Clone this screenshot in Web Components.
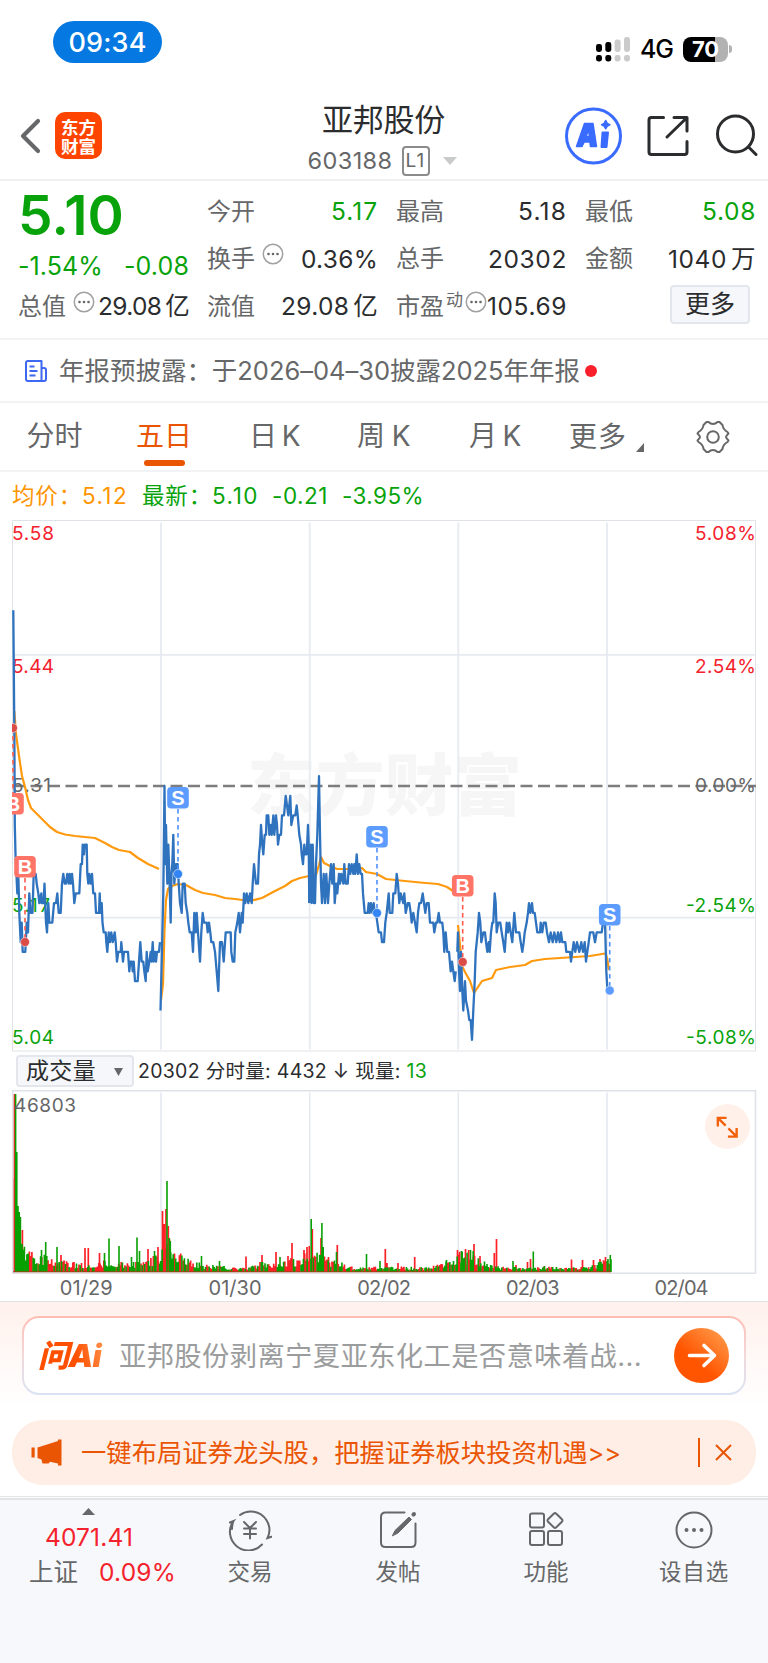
<!DOCTYPE html>
<html lang="zh-CN">
<head>
<meta charset="UTF-8">
<meta name="viewport" content="width=device-width, initial-scale=1.0">
<title>亚邦股份 603188</title>
<style>
    :root {
        --ink: #2b2c2e;
        --grey: #666768;
        --up: #f4222d;
        --down: #08a30b;
        --brand: #ea5504;
    }
    body {
        margin: 0;
        width: 768px;
        height: 1663px;
        overflow: hidden;
        background: #fff;
        color: var(--ink);
        font-family: Inter, "Noto Sans CJK SC", sans-serif;
        font-size: 24px;
        line-height: 1;
    }
</style>
</head>
<body>
<stock-page></stock-page>

<script>
// Spreads its text over a given width with letter-spacing
class FitText extends HTMLElement {
    constructor() {
        super();
        this.attachShadow({ mode: 'open' });
        this.shadowRoot.innerHTML = '<style>:host { display: inline-block; white-space: nowrap; flex: none; text-align: left; }</style><slot></slot>';
    }

    connectedCallback() {
        const target = parseFloat(this.getAttribute('w'));
        const natural = this.getBoundingClientRect().width;
        const count = Array.from(this.textContent).length;
        this.style.letterSpacing = (target - natural) / count + 'px';
        this.style.width = target + 'px';
    }
}
customElements.define('fit-text', FitText);

class StatusBar extends HTMLElement {
    constructor() {
        super();
        this.attachShadow({ mode: 'open' });
        this.shadowRoot.innerHTML = `
            <style>
                :host { display: flex; justify-content: space-between; height: 88px; box-sizing: border-box; padding: 21px 36px 0 53px; color: #000; }
                .time { width: 109px; height: 42px; border-radius: 21px; background: #0579e1; color: #fff; display: flex; align-items: center; justify-content: center; font-size: 27px; font-weight: 500; }
                .right { display: flex; align-items: center; height: 56px; }
                .net { margin-left: 10px; font-size: 25px; font-weight: 500; }
                .battery { margin-left: 10px; width: 45px; height: 25px; border-radius: 8px; background: linear-gradient(90deg, #000 71%, #b2b2b2 71%); color: #fff; font-size: 22px; font-weight: 700; display: flex; align-items: center; justify-content: center; }
                .nub { width: 3px; height: 8px; margin-left: 1px; border-radius: 0 4px 4px 0; background: #b2b2b2; }
            </style>
            <div class="time"><fit-text w="78">09:34</fit-text></div>
            <div class="right">
                <svg width="34" height="25" viewBox="0 0 34 25">
                    <g fill="#000"><rect x="0" y="7" width="6" height="8" rx="2.4"/><rect x="9.3" y="5" width="6" height="10" rx="2.4"/><rect x="0" y="18" width="6" height="6.5" rx="2.4"/><rect x="9.3" y="18" width="6" height="6.5" rx="2.4"/></g>
                    <g fill="#cbcbcb"><rect x="18.6" y="2.5" width="6" height="12.5" rx="2.4"/><rect x="28" y="0" width="6" height="15" rx="2.4"/><rect x="18.6" y="18" width="6" height="6.5" rx="2.4"/><rect x="28" y="18" width="6" height="6.5" rx="2.4"/></g>
                </svg>
                <fit-text class="net" w="33">4G</fit-text>
                <div class="battery"><fit-text w="27">70</fit-text></div>
                <div class="nub"></div>
            </div>
        `;
    }
}
customElements.define('status-bar', StatusBar);

class StockHeader extends HTMLElement {
    constructor() {
        super();
        this.attachShadow({ mode: 'open' });
        this.shadowRoot.innerHTML = `
            <style>
                :host { display: grid; grid-template-columns: 1fr 1fr 1fr; height: 93px; box-sizing: border-box; border-bottom: 2px solid #eeeff1; }
                .left { display: flex; padding: 24px 0 0 20px; align-items: flex-start; }
                .back { margin: 6px 13px 0 0; }
                .logo { width: 47px; height: 47px; border-radius: 10px; background: #ff4400; color: #fff; font: 700 17.5px/19px "Noto Sans CJK SC", sans-serif; text-align: center; padding-top: 5px; box-sizing: border-box; }
                .title { text-align: center; padding-top: 16px; font-size: 31px; line-height: 32px; margin-left: -1px; }
                .code { display: flex; align-items: center; justify-content: center; margin: 10px 4px 0 0; color: var(--grey); font-size: 23.5px; line-height: 30px; }
                .level { border: 2px solid #8b8c8d; border-radius: 4px; width: 24px; height: 26px; margin: 0 13px 0 9px; font-size: 19px; line-height: 26px; text-align: center; }
                .right { display: flex; justify-content: flex-end; padding: 18px 10.5px 0 0; }
            </style>
            <div class="left">
                <svg class="back" width="22" height="36" viewBox="0 0 22 36" fill="none" stroke="#666768" stroke-width="4.2" stroke-linecap="round" stroke-linejoin="round"><path d="M18 3L3 18l15 15"/></svg>
                <div class="logo">东方<br>财富</div>
            </div>
            <div>
                <div class="title"><fit-text w="123">亚邦股份</fit-text></div>
                <div class="code"><fit-text w="85">603188</fit-text><span class="level"><fit-text w="20">L1</fit-text></span><svg width="14" height="8"><path d="M0 0h14L7 8z" fill="#c9cacb"/></svg></div>
            </div>
            <div class="right">
                <svg width="193" height="60" viewBox="0 0 193 60" fill="none" stroke="#2b2c2e" stroke-width="3" stroke-linecap="round" stroke-linejoin="round">
                    <circle cx="28.5" cy="30" r="27" stroke="#3a6bff"/>
                    <path d="M19.500 17.500h8.500L31.500 40.500h-6l-.6-4.500h-5.700L17 40.500h-5.500zM23.700 24l-2.700 6.500h3.400z" fill="#3a6bff" fill-rule="evenodd" stroke="#3a6bff" stroke-width="1.500"/>
                    <path d="M37.500 26.500h5.500L41.500 41h-5z" fill="#3a6bff" stroke="#3a6bff" stroke-width="2"/>
                    <path d="M40.700 14.500q1 3.400 4.200 4.200-3.200.8-4.200 4.200-1-3.400-4.200-4.200 3.200-.8 4.200-4.200z" fill="#3a6bff" stroke="#3a6bff" stroke-width="1.500"/>
                    <path d="M98.500 11.500H86.500q-2.500 0-2.500 2.500v32q0 2.500 2.500 2.500h33q2.500 0 2.500-2.500V35.500M109 11.500h13V25M121 12.500L102 31"/>
                    <circle cx="170.500" cy="28" r="18"/>
                    <path d="M183.500 41l7.500 7.500"/>
                </svg>
            </div>
        `;
    }
}
customElements.define('stock-header', StockHeader);

// One label / value line of the quote table; info adds the round hint icon
class QuoteCell extends HTMLElement {
    constructor() {
        super();
        this.attachShadow({ mode: 'open' });
        const sup = this.getAttribute('sup') || '';
        const info = this.hasAttribute('info');
        const unit = this.getAttribute('unit') || '';
        this.shadowRoot.innerHTML = `
            <style>
                :host { display: flex; align-items: center; justify-content: space-between; height: 47px; }
                .label { display: flex; color: var(--grey); font-size: 24px; line-height: 30px; margin-right: -20px; }
                .value { color: var(--cell, var(--ink)); font-size: 24.5px; }
                .sup { font-size: 17px; line-height: 18px; margin: -1px 2px 0 2px; }
                .unit { margin-left: 4px; }
                svg { margin: -1px 0 0 7px; }
                .sup + svg { margin-left: 0; }
            </style>
            <span class="label"><fit-text w="48">${this.getAttribute('label')}</fit-text>${sup ? `<span class="sup">${sup}</span>` : ''}${info ? `
                <svg width="22" height="22" viewBox="0 0 22 22"><circle cx="11" cy="11" r="9.7" fill="none" stroke="#a0a1a2" stroke-width="1.500"/><g fill="#666768"><circle cx="6.500" cy="11" r="1.300"/><circle cx="11" cy="11" r="1.300"/><circle cx="15.500" cy="11" r="1.300"/></g></svg>` : ''}</span>
            <fit-text class="value" w="${this.getAttribute('w')}">${this.getAttribute('value')}${unit ? `<span class="unit">${unit}</span>` : ''}</fit-text>
        `;
    }
}
customElements.define('quote-cell', QuoteCell);

class QuotePanel extends HTMLElement {
    constructor() {
        super();
        this.attachShadow({ mode: 'open' });
        this.shadowRoot.innerHTML = `
            <style>
                :host { display: grid; grid-template-columns: repeat(4, 171px); grid-auto-rows: 47.5px; column-gap: 18px; height: 159px; box-sizing: border-box; padding: 7px 0 0 18px; border-bottom: 2px solid #f2f3f5; }
                .price { color: var(--down); font-size: 55px; font-weight: 600; line-height: 55px; }
                .change { color: var(--down); display: flex; justify-content: space-between; align-items: center; padding-top: 14px; font-size: 25px; }
                .down { --cell: var(--down); }
                .more { justify-self: end; margin: 2px 6px 0 0; width: 80px; height: 39px; box-sizing: border-box; border: 2px solid #e3e6ec; border-radius: 4px; background: #f6f7fa; font-size: 25px; display: flex; align-items: center; justify-content: center; }
            </style>
            <div class="price"><fit-text w="106">5.10</fit-text></div>
            <quote-cell class="down" label="今开" value="5.17" w="47"></quote-cell>
            <quote-cell label="最高" value="5.18" w="49"></quote-cell>
            <quote-cell class="down" label="最低" value="5.08" w="54"></quote-cell>
            <div class="change"><fit-text w="85">-1.54%</fit-text><fit-text w="65">-0.08</fit-text></div>
            <quote-cell label="换手" info value="0.36%" w="77"></quote-cell>
            <quote-cell label="总手" value="20302" w="79"></quote-cell>
            <quote-cell label="金额" value="1040" unit="万" w="88"></quote-cell>
            <quote-cell label="总值" info value="29.08" unit="亿" w="91"></quote-cell>
            <quote-cell label="流值" value="29.08" unit="亿" w="97"></quote-cell>
            <quote-cell label="市盈" sup="动" info value="105.69" w="80"></quote-cell>
            <div class="more">更多</div>
        `;
    }
}
customElements.define('quote-panel', QuotePanel);

class NoticeLine extends HTMLElement {
    constructor() {
        super();
        this.attachShadow({ mode: 'open' });
        this.shadowRoot.innerHTML = `
            <style>
                :host { display: flex; align-items: center; height: 63px; box-sizing: border-box; border-bottom: 2px solid #f2f3f5; padding-left: 25px; color: var(--grey); font-size: 25.5px; }
                fit-text { margin-left: 12px; }
                i { width: 12px; height: 12px; border-radius: 50%; background: #f9202b; margin-left: 5px; }
            </style>
            <svg width="22" height="22" viewBox="0 0 22 22" fill="none" stroke="#3f68f0" stroke-width="2" stroke-linejoin="round"><path d="M3 1h13.500v20H3q-2 0-2-2V3q0-2 2-2zM16.500 8H19q2 0 2 2v9q0 2-2 2h-2.500M4.500 6.500h5M4.500 11h8M4.500 15.500h6"/></svg>
            <fit-text w="521">${this.getAttribute('text')}</fit-text>
            <i></i>
        `;
    }
}
customElements.define('notice-line', NoticeLine);

class PeriodTabs extends HTMLElement {
    constructor() {
        super();
        this.attachShadow({ mode: 'open' });
        this.shadowRoot.innerHTML = `
            <style>
                :host { display: grid; grid-template-columns: 109px 110px 110px 109px 113px 127px 70px; height: 69px; box-sizing: border-box; border-bottom: 2px solid #f2f3f5; color: var(--grey); font-size: 28px; }
                div { display: flex; flex-direction: column; align-items: center; height: 67px; line-height: 66px; }
                .on { color: var(--brand); }
                .on::after { content: ""; width: 41px; height: 6px; border-radius: 3px; background: currentColor; margin-top: -9px; }
                .row { flex-direction: row; padding-left: 18px; box-sizing: border-box; }
                .row svg { margin: 21px 0 0 9px; }
                .gear { justify-content: center; }
            </style>
            <div>分时</div>
            <div class="on">五日</div>
            <div><fit-text w="50">日 K</fit-text></div>
            <div><fit-text w="53">周 K</fit-text></div>
            <div><fit-text w="51">月 K</fit-text></div>
            <div class="row"><fit-text w="58">更多</fit-text><svg width="8" height="9"><path d="M8 0v9H0z" fill="#666768"/></svg></div>
            <div class="gear"><svg width="34" height="34" viewBox="0 0 34 34" fill="none" stroke="#666768" stroke-width="2" stroke-linejoin="round"><path d="M12.500 2q2 2 4.500 2t4.500-2h2l3 3q.5 4.500 5 7l1 1.500Q30 16 30 17t2.500 3.500L31.500 22q-4.500 2.500-5 7l-3 3h-2q-2-2-4.500-2t-4.500 2h-2l-3-3q-.5-4.500-5-7l-1-1.500Q4 18 4 17T1.500 13.500L2.500 12q4.500-2.500 5-7l3-3z"/><circle cx="17" cy="17" r="5.800"/></svg></div>
        `;
    }
}
customElements.define('period-tabs', PeriodTabs);

class ChartLegend extends HTMLElement {
    constructor() {
        super();
        this.attachShadow({ mode: 'open' });
        this.shadowRoot.innerHTML = `
            <style>
                :host { display: flex; align-items: center; height: 48px; padding-left: 12px; font-size: 22.5px; color: var(--down); }
                .avg { color: #ff9500; }
            </style>
            <fit-text class="avg" w="70">均价：</fit-text><fit-text class="avg" w="46">5.12</fit-text>
            <fit-text w="70" style="margin-left:14px">最新：</fit-text><fit-text w="47">5.10</fit-text>
            <fit-text w="56" style="margin-left:13px">-0.21</fit-text><fit-text w="82" style="margin-left:14px">-3.95%</fit-text>
        `;
    }
}
customElements.define('chart-legend', ChartLegend);

// Price line: x, ticks (0.01) below the previous close, one list a day
const PRICE = [
    [13.3,-18,14.3,-6,14.8,4,15.5,7,16,8,17.3,11,18.3,9,19.3,13,20.7,16,21.7,14,22.7,17,25.3,17,26.7,14,28,15,29.3,11,30.7,13,32.5,13,33.7,9,35.7,9,36.7,10,38.3,11,39.3,12,41.3,11,41.6,12,43.5,12,44.5,10,46,14,47,15,48.3,12,49.3,14,52.3,14,54,12,56,12,57.3,11,58.7,13,60.7,13,62,10,63.3,9,64.7,10,66,10,67.3,9,68.7,10,69.7,9,70.8,10,72,9,73,10,74.3,12,75.7,11,79.3,11,80.7,8,82,8,82.7,6,84,7,84.7,6,86.7,6,87.3,9,88.3,10,89.3,9,90.7,10,92,9,93.3,11,95,11,96,13,99,13,99.7,11,100.5,13,101.7,12,102.5,14,103.7,15,105.7,15,106.3,16,107.3,17,108.7,15,110,16,111.3,15,112.7,16,114.7,15,115.7,16,117,18,118.3,17,120.7,17,121.3,16,123,18,124,17,128,17,129.3,19,130.3,18,132,18,132.7,19,133.7,18,135,20,137.7,20,139,18,140.3,16,141.7,18,143.3,18,144.3,19,145.7,20,146.7,17,147.7,19,149.3,18,150.7,17,151.5,18,152.7,16,153.7,18,155,17,156,18,157,17,159,17,160,16],
    [160.5,23,161.7,18,163.3,11,164.5,0,165.3,8,166,4,167.3,10,168.3,6,169.3,9,170.7,14,171.5,9,172.3,8,173.3,5,174.3,10,176,8,177.7,8,178.7,10,180,12,181.7,13,182.7,10,184.7,10,185.7,12,187.3,13,188.3,14,189.7,15,191.7,15,193,17,194.3,13,195.7,15,196.7,13,198,15,200,18,201.3,15,202.7,13,204,14,206.7,14,207.7,15,209,14,210.3,15,211.3,16,213.3,16,215,17,216.7,19,218.3,21,220,16,222,16,223.7,18,225.7,15,230.7,15,231.3,17,232.7,18,234.3,18,235.3,15,237.3,14,238.7,13,240,15,241.7,13,242.7,14,244,11,245.3,12,246.7,11,248.3,12,250,11,251.7,12,252.7,10,254,8,256,10,258,10,259,7,260,6,261,4,262.3,6,263.3,7,264.7,5,266,5,266.7,3,268.3,3,269.3,5,270.7,4,271.7,5,273.3,3,274.3,5,276,3,277,4,278,6,279.3,5,281,5,282,3,284,3,285.7,1,287,2,288.3,3,290.3,1,291.3,4,293.3,3,295.3,3,296.7,2,297.7,3,299.3,5,301,6,301.7,7,303,8,304.3,6,305.3,7,306.7,7,308,4,308.7,6,309.3,12],
    [309.3,12,310.7,6,311.7,12,312.7,6,314,12,315,12,316,8,317.3,5,319,-1,320,5,321,10,322,12,323.7,9,325,12,326.3,9,328,12,329.3,10,331,8,332.3,10,333.7,8,334.7,12,336.3,10,337.3,11,339,9,340,10,341.3,9,343.3,10,344.3,8,345.7,10,347.7,10,349,8,350.3,9,351.7,8,353.3,9,354.3,8,355.3,9,356.7,7,358,9,359.3,8,360.7,9,362,9,363,11,364.7,13,367.7,13,368.7,12,369.7,13,371,12,372.3,13,373.7,12,374.7,13,376,13,377.3,14,378.7,15,381,15,382,16,384,16,385.3,14,386.7,13,388.7,11,389.7,13,392.3,13,393.3,11,395.3,11,396.7,9,398,10,399.3,12,400.7,11,403.3,12,404.3,11,405.7,13,407.7,12,409.3,12,410.7,13,411.7,14,413.3,13,415,14,416.7,15,418,13,419.3,12,421,12,422.7,11,424,12,425.3,13,426.7,12,428.7,12,430,14,433.3,14,434.3,15,436,14,437.3,14,438.7,13,440,14,442.3,14,443.3,15,444.3,17,445.7,15,447.3,17,449,17,450.7,19,452,18,453.3,19,454.7,20,455.7,19],
    [457.3,17,458,15,459,19,460,21,461,17,462.3,21,463.3,23,465,20,466,22,468,23,469.3,24,470.7,24,472,26,473.3,23,474.7,20,475.7,17,477.7,15,479,13,480.3,14,481.3,16,483.3,15,485,15,486,16,487.3,17,488.7,16,489.7,17,491,15,492.3,14,493.3,14,494.7,11,495.7,12,496.7,15,498.3,14,500.3,14,501.7,15,503.3,16,504.7,17,506.7,14,508,15,509.3,14,510.7,15,512.3,16,514.3,13,516,15,519.3,15,520.7,16,522.3,17,523.7,16,524.7,15,526.7,14,528,13,529,12,530.3,13,532,12,533,13,534.7,13,536,14,537.3,15,540,15,540.7,14,542.3,15,543.7,14,545.7,14,547,15,549,16,550.7,15,552.7,16,554.3,15,556.3,16,558,15,559.7,16,561,15,562.3,16,565.3,16,566.3,17,570,17,571,18,572.3,17,573.7,16,575.3,17,577,16,579.3,17,581.3,16,583,17,584.7,16,586,18,587.3,17,588.7,16,590,15,593.3,15,595,16,596.7,15,601.7,15,603,14,604.7,13,605.3,15,606.3,19,607.5,21]
];

// Average line: x, y
const AVERAGE = [
    'M14.3 711L16 734 19 756 22 776 25 787 28 800 31 808 37 814 44 821 50 827 57 832 65 834.5 75 836 95 838 105 843 112 847 119 850 130 852 138 858 148 864 159 869',
    'M161 1000L163 984 164.5 930 166 900 168 889 172 886 178 884 186 885 195 890 203 893 215 895 225 898 235 899 250 901 262 898 275 891 285 886 292 881 300 878 309 876',
    'M310 877L316 875 319 865 321 857 324 863 330 866 337 869 350 869 362 868 366 872 377 874 386 879 405 881 420 882.5 438 884 447 887 456 893',
    'M458 925L460 945 462 966 465 972 470 981 474 993 478 987 482 981 492 978 496 970 510 967 525 965 532 961 545 959 560 958 590 956 605 953.5',
    'M605.5 953L607 958 609 970'
];

// Own trades: side, x, top of the badge, y of the dot
const TRADES = [
    ['B', 13, 793, 728],
    ['B', 25, 856, 942],
    ['S', 178, 787, 874],
    ['S', 377, 826, 913],
    ['B', 462.7, 875, 962],
    ['S', 609.7, 904, 990.5]
];

class PriceChart extends HTMLElement {
    constructor() {
        super();
        this.attachShadow({ mode: 'open' });
        const line = PRICE.map(day => {
            const pts = [];
            for (let i = 0; i < day.length; i += 2) {
                pts.push(day[i] + ',' + (786 + day[i + 1] * 9.76).toFixed(1));
            }
            return `<polyline points="${pts.join(' ')}"/>`;
        }).join('');
        const trades = TRADES.map(([side, x, top, dot]) => {
            const fill = side === 'B' ? '#ff7467' : '#5c9cff';
            const stroke = side === 'B' ? '#ff5a4c' : '#4c90fa';
            const point = side === 'B' ? '#dc4c47' : (x > 600 ? '#5c9cff' : '#3385f5');
            const from = dot > top ? top + 22 : dot;
            const to = dot > top ? dot : top;
            return `
                <path d="M${x} ${from}V${to}" stroke="${stroke}" stroke-width="1.600" stroke-dasharray="4.500 3.500"/>
                <circle cx="${x}" cy="${dot}" r="4.500" fill="${point}" stroke="#fff" stroke-opacity=".5" stroke-width="1"/>
                <rect x="${x - 10.8}" y="${top}" width="21.600" height="21.600" rx="4" fill="${fill}"/>
                <text x="${x}" y="${top + 18}" text-anchor="middle" font-family="Liberation Sans" font-size="20" font-weight="700" fill="#fff">${side}</text>`;
        }).join('');
        this.shadowRoot.innerHTML = `
            <style>
                :host { display: block; height: 532px; }
                svg { display: block; }
                .axis { font-size: 19px; }
                .mark { font: 900 67px "Noto Sans CJK SC", sans-serif; fill: #f6f6f7; }
            </style>
            <svg width="768" height="532" viewBox="0 520 768 532" fill="none">
                <defs><clipPath id="frame"><path d="M12 520h744v532H12z"/></clipPath></defs>
                <text class="mark" x="247" y="810" textLength="275" lengthAdjust="spacingAndGlyphs">东方财富</text>
                <path d="M12.500 520.500h743v530.500h-743z" stroke="#dfe2e6"/>
                <path d="M13 654.800h743M13 917.700h743M161 522.500v527M309.700 522.500v527M458.300 522.500v527M607 522.500v527" stroke="#e7eaf1" stroke-width="1.800"/>
                <path d="M13 786H756" stroke="#7d7d7d" stroke-width="2.400" stroke-dasharray="12 5.500"/>
                <g class="axis">
                    <g fill="#f4222d">
                        <text x="12" y="539.500" textLength="42">5.58</text>
                        <text x="12" y="672.500" textLength="42">5.44</text>
                        <text x="695" y="539.500" textLength="61">5.08%</text>
                        <text x="695" y="672.500" textLength="61">2.54%</text>
                    </g>
                    <g fill="#666768">
                        <text x="12" y="792" textLength="39">5.31</text>
                        <text x="695" y="792" textLength="61">0.00%</text>
                    </g>
                    <g fill="#08a30b">
                        <text x="12" y="912" textLength="38">5.17</text>
                        <text x="12" y="1044" textLength="42">5.04</text>
                        <text x="686" y="912" textLength="70">-2.54%</text>
                        <text x="686" y="1044" textLength="70">-5.08%</text>
                    </g>
                </g>
                <g clip-path="url(#frame)">
                    <g stroke="#ff9a0f" stroke-width="2.200" stroke-linejoin="round">${AVERAGE.map(d => `<path d="${d}"/>`).join('')}</g>
                    <g stroke="#2f73bf" stroke-width="2.300" stroke-linejoin="round">${line}</g>
                </g>
                <g clip-path="url(#frame)">${trades}</g>
            </svg>
        `;
    }
}
customElements.define('price-chart', PriceChart);

class VolumeLegend extends HTMLElement {
    constructor() {
        super();
        this.attachShadow({ mode: 'open' });
        this.shadowRoot.innerHTML = `
            <style>
                :host { display: flex; align-items: center; height: 38px; padding-left: 16px; font-size: 19.5px; }
                .pick { display: flex; align-items: center; width: 118px; height: 32px; box-sizing: border-box; border: 2px solid #e3e6ec; border-radius: 4px; background: #f6f7fa; padding: 1px 0 0 8px; font-size: 23px; margin-right: 4px; }
                .pick svg { margin-left: 18px; }
                .now { color: var(--down); }
                .stats { padding-top: 2px; }
            </style>
            <div class="pick"><fit-text w="70">成交量</fit-text><svg width="9" height="8"><path d="M0 0h9L4.500 8z" fill="#666768"/></svg></div>
            <fit-text class="stats" w="289">20302 分时量: 4432 ↓ 现量: <span class="now">13</span></fit-text>
        `;
    }
}
customElements.define('volume-legend', VolumeLegend);

// Typical bar height along the axis: x, height
const LEVEL = [21,30,26,26,30,22,36,18,45,16,52,14,60,11,75,9,90,8,100,10,112,12,125,8,135,10,145,12,155,16,160,18,163,30,170,30,174,21,182,17,190,12,205,7,220,6,235,4,250,5,262,10,268,7,280,9,290,13,300,13,305,19,310,25,314,19,325,18,330,12,340,10,350,5,375,5,395,5,430,5,440,8,450,12,456,15,460,21,470,18,480,12,490,7,500,5,545,5,570,4,590,6,600,10,610,15];
// Bars that stand out: x, height, 1 for a rise
const SPIKES = [13.3,93,1,14.2,178,1,15.6,178,0,16.8,120,0,18,66,0,19.2,60,0,20.4,55,0,22.4,42,1,41.5,22,0,45.7,30,0,57,25,0,61,17,1,85,24,1,88.3,24,1,99.5,19,1,104.5,19,0,109,33.5,0,119,26,0,131.5,15,0,137,34.5,0,139.5,21,0,148,23,1,154.5,21,0,158,25,1,162.5,61,1,164.2,48,1,166,63,1,168.3,46,1,167,91,0,169.3,34,0,170.3,31,0,201.5,16,0,219.5,11,0,246,15.5,1,262,17,1,276,20,1,280,15,0,292,29,1,288,16,1,304,22,1,307,25,1,309.3,26,1,312.3,43,1,311.2,53,0,321,34,1,321.9,49,0,323.2,25,0,328.5,15,1,336.5,20,0,337.3,27,1,366.5,18,0,380,11,0,385.3,23,1,387,9,1,398,9,1,414.7,15,1,446.5,12,0,457.5,22,1,461.5,21,0,465.5,23,1,468.7,22,1,470.5,22,0,474,28,1,473.2,21,0,480,16,1,494.3,19,1,496.5,33,1,513,11,0,516,7,1,527.5,10,1,530.5,13,1,533.3,20.5,0,544.5,6,0,571.5,12.5,1,582.5,12,1,593.5,12,1,600,13,1,605.5,15,1,608,13,0,610.3,17,0];

class VolumeChart extends HTMLElement {
    constructor() {
        super();
        this.attachShadow({ mode: 'open' });
        this.shadowRoot.innerHTML = `
            <style>
                :host { display: block; height: 212px; border-bottom: 1px solid #dfe1e5; position: relative; box-sizing: border-box; }
                svg { display: block; }
                .dates { display: grid; grid-template-columns: repeat(5, 148.700px); padding-left: 12px; color: var(--grey); font-size: 20px; line-height: 30px; text-align: center; margin-top: -1px; }
                .full { position: absolute; right: 18.500px; top: 14px; width: 45px; height: 45px; border-radius: 50%; background: #fff1ea; display: flex; align-items: center; justify-content: center; }
            </style>
            <svg width="768" height="184" viewBox="0 1089.500 768 184" fill="none">
                <path d="M161 1092v180M309.700 1092v180M458.300 1092v180M607 1092v180" stroke="#e4e8ef" stroke-width="1.500"/>
                ${this.bars()}
                <path d="M12.800 1090.300h742.700v182.500h-742.700z" stroke="#dfe2e8" stroke-width="1.600"/>
                <path d="M13 1271.300H611" stroke="#a04012" stroke-width="1"/>
                <text x="14" y="1111.500" font-size="19" fill="#666768" textLength="62">46803</text>
            </svg>
            <div class="dates">${['01/29', '01/30', '02/02', '02/03', '02/04'].map(d => `<div><fit-text w="53">${d}</fit-text></div>`).join('')}</div>
            <div class="full"><svg width="22" height="22" viewBox="0 0 24 24" fill="none" stroke="#f2600c" stroke-width="2.600"><path d="M2 11.500V2h9.500M2.500 2.500l8 8M22.500 13v9.500H13M22 22l-8.500-8.500"/></svg></div>
        `;
    }

    bars() {
        const out = ['', ''];
        const add = (x, h, up) => { out[up] += `M${x.toFixed(1)} 1271.500v-${h.toFixed(1)}`; };
        let seed = 603188;
        const random = () => (seed = (seed * 16807) % 2147483647) / 2147483647;
        let k = 0;
        for (let x = 17; x < 611; x += 1.24) {
            while (k < LEVEL.length - 4 && LEVEL[k + 2] < x) k += 2;
            const t = Math.max(0, (x - LEVEL[k]) / (LEVEL[k + 2] - LEVEL[k]));
            const level = LEVEL[k + 1] + (LEVEL[k + 3] - LEVEL[k + 1]) * t;
            add(x, Math.max(1, level * (0.4 + 0.7 * random())), x > 28 && random() < 0.5 ? 1 : 0);
        }
        for (let i = 0; i < SPIKES.length; i += 3) add(SPIKES[i], SPIKES[i + 1], SPIKES[i + 2]);
        return `<path d="${out[1]}" stroke="#fb2127" stroke-width="1.700"/><path d="${out[0]}" stroke="#08a000" stroke-width="1.600"/>`;
    }
}
customElements.define('volume-chart', VolumeChart);

class AskBar extends HTMLElement {
    constructor() {
        super();
        this.attachShadow({ mode: 'open' });
        this.shadowRoot.innerHTML = `
            <style>
                :host { display: block; height: 106px; box-sizing: border-box; padding: 14px 22px 0; background: linear-gradient(#fff1ec, #fff); }
                .box { display: flex; align-items: center; height: 79px; box-sizing: border-box; border: 2px solid transparent; border-radius: 17px; background: linear-gradient(#fff, #fff) padding-box, linear-gradient(#ffbdb3, #f3d9da 50%, #d9e3f5) border-box; padding: 0 15px 0 14px; }
                .logo { font: italic 900 31px/34px Inter, "Noto Sans CJK SC", sans-serif; background: linear-gradient(75deg, #ff5000 55%, #ff9450); -webkit-background-clip: text; color: transparent; padding-right: 4px; }
                .ask { color: #9b9c9d; font-size: 27.300px; margin: 2px 0 0 14px; }
                .go { margin-left: auto; display: block; }
            </style>
            <div class="box">
                <div class="logo"><fit-text w="63">问Ai</fit-text></div>
                <fit-text class="ask" w="523">亚邦股份剥离宁夏亚东化工是否意味着战...</fit-text>
                <svg class="go" width="55" height="55" viewBox="0 0 55 55" fill="none"><defs><linearGradient id="g" x1=".2" y1=".8" x2=".8" y2=".1"><stop offset=".3" stop-color="#ff5500"/><stop offset="1" stop-color="#ff9140"/></linearGradient></defs><circle cx="27.500" cy="27.500" r="27.500" fill="url(#g)"/><path d="M15.500 27.500h25M30 17.500l10.500 10L30 37.500" stroke="#fff" stroke-width="3.600" stroke-linecap="round" stroke-linejoin="round"/></svg>
            </div>
        `;
    }
}
customElements.define('ask-bar', AskBar);

class PromoBanner extends HTMLElement {
    constructor() {
        super();
        this.attachShadow({ mode: 'open' });
        this.shadowRoot.innerHTML = `
            <style>
                :host { display: flex; align-items: center; height: 65px; margin: 12px 12px 11px; border-radius: 31px; background: #feeee6; color: var(--brand); padding: 0 24px 0 19px; box-sizing: border-box; font-size: 25.300px; }
                fit-text { margin-left: 19px; }
                i { width: 2px; height: 29px; background: currentColor; margin: 0 15px 0 auto; }
            </style>
            <svg width="31" height="27" viewBox="0 0 31 27" fill="#ea5504"><path d="M.500 8.500h3.200v10H.500zM6.500 8.500L27 2V.500h3.500v26H27V24.500l-8-1.800-1.500 1.800h-6l-1-4-4-1.500z"/></svg>
            <fit-text w="540">一键布局证券龙头股，把握证券板块投资机遇&gt;&gt;</fit-text>
            <i></i>
            <svg width="17" height="17" viewBox="0 0 17 17" stroke="#ea5504" stroke-width="2"><path d="M1 1l15 15M16 1L1 16"/></svg>
        `;
    }
}
customElements.define('promo-banner', PromoBanner);

class BottomNav extends HTMLElement {
    constructor() {
        super();
        this.attachShadow({ mode: 'open' });
        this.shadowRoot.innerHTML = `
            <style>
                :host { display: grid; grid-template-columns: 176px repeat(4, 148px); height: 167px; box-sizing: border-box; padding-top: 4px; background: linear-gradient(#e2e4e6 1px, #fbfbfc 1px, #fbfbfc 2px, #e2e4e6 2px, #e2e4e6 4px, #f7f8fb 4px); color: var(--grey); }
                .index { display: flex; flex-direction: column; align-items: flex-start; padding-top: 8px; color: var(--up); font-size: 24.500px; }
                .index svg { margin: 0 0 10px 82px; }
                .value { margin: 0 0 11px 45px; line-height: 24px; }
                .row { display: flex; align-items: center; justify-content: space-between; padding-left: 29px; width: 147px; line-height: 24px; }
                .name { color: var(--grey); font-size: 24.500px; }
                .item { display: flex; flex-direction: column; align-items: center; padding-top: 9px; font-size: 22.500px; }
                .item svg { margin-bottom: 10px; }
            </style>
            <div class="index">
                <svg width="13" height="7"><path d="M6.500 0L13 7H0z" fill="#666768"/></svg>
                <fit-text class="value" w="88">4071.41</fit-text>
                <div class="row"><span class="name">上证</span><fit-text w="77">0.09%</fit-text></div>
            </div>
            <div class="item">
                <svg width="44" height="42" viewBox="0 0 44 42" fill="none" stroke="#666768" stroke-width="2" stroke-linecap="round"><path d="M12 6Q17 2.500 22.500 2.500A18.500 18.500 0 0 1 39.500 29l4-1.300M34 35.500A18.500 18.500 0 0 1 5.500 12L2 13.500M5.500 12Q4 16 4 20"/><path d="M16 13l6 6 6-6M16 19.500h12M16 25h12M22 19.500v10"/></svg>交易</div>
            <div class="item">
                <svg width="38" height="42" viewBox="0 0 38 42" fill="none" stroke="#666768" stroke-width="2" stroke-linecap="round"><path d="M25.500 3.500H6.500q-4.500 0-4.500 4.500v25.500q0 4.500 4.500 4.500H32q4.500 0 4.500-4.500V14.500"/><path d="M13.500 26.500l2.500-5L30 8l2.500 2.500L19 24z" fill="#666768" stroke-width="1"/><path d="M34.500 5.500l.5-.5" stroke-width="4"/></svg>发帖</div>
            <div class="item">
                <svg width="36" height="42" viewBox="0 0 36 42" fill="none" stroke="#666768" stroke-width="2" stroke-linejoin="round"><rect x="2" y="4.500" width="14" height="14" rx="2"/><rect x="2" y="22" width="14" height="14" rx="2"/><rect x="20" y="22" width="14" height="14" rx="2"/><path d="M25.700 4.700q1.300-1.200 2.600 0l5.600 5.600q1.200 1.200 0 2.400l-5.600 5.600q-1.300 1.200-2.600 0l-5.600-5.600q-1.200-1.200 0-2.400z"/></svg>功能</div>
            <div class="item">
                <svg width="40" height="42" viewBox="0 0 40 42" fill="none" stroke="#666768" stroke-width="2"><circle cx="20" cy="21" r="17.500"/><g fill="#666768" stroke="none"><circle cx="12.500" cy="21" r="2"/><circle cx="20" cy="21" r="2"/><circle cx="27.500" cy="21" r="2"/></g></svg><fit-text w="70">设自选</fit-text></div>
        `;
    }
}
customElements.define('bottom-nav', BottomNav);

class StockPage extends HTMLElement {
    constructor() {
        super();
        this.attachShadow({ mode: 'open' });
        this.shadowRoot.innerHTML = `
            <style>
                :host { display: flex; flex-direction: column; width: 768px; height: 1663px; }
                :host > * { flex: none; }
            </style>
            <status-bar></status-bar>
            <stock-header></stock-header>
            <quote-panel></quote-panel>
            <notice-line text="年报预披露：于2026–04–30披露2025年年报"></notice-line>
            <period-tabs></period-tabs>
            <chart-legend></chart-legend>
            <price-chart></price-chart>
            <volume-legend></volume-legend>
            <volume-chart></volume-chart>
            <ask-bar></ask-bar>
            <promo-banner></promo-banner>
            <bottom-nav></bottom-nav>
        `;
    }
}
customElements.define('stock-page', StockPage);
</script>
</body>
</html>
